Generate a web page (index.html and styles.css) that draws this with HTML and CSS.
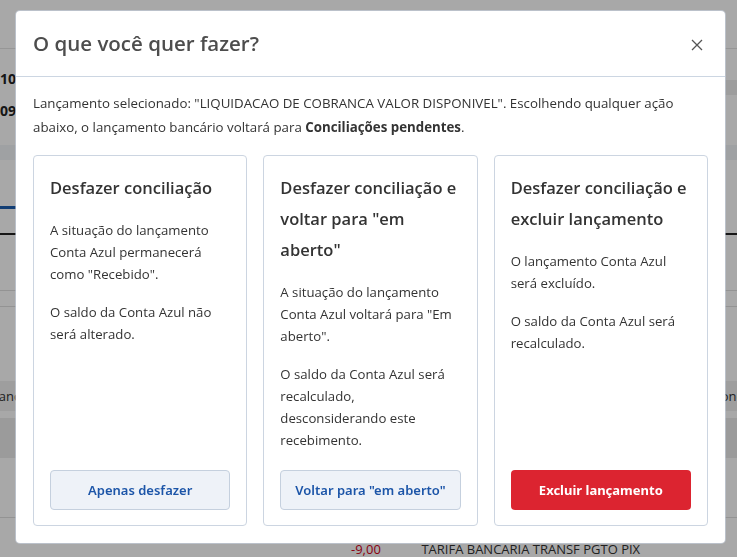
FILE: index.html
```html
<!DOCTYPE html>
<html lang="pt-BR">
<head>
    <meta charset="UTF-8">
    <meta name="viewport" content="width=device-width, initial-scale=1.0">
    <title>Conciliação</title>
    <link rel="stylesheet" href="styles.css">
</head>
<body>
    <div class="page">
        <div class="topbar"></div>
        <div class="summary">
            <div class="summary-values">
                <p class="amount">10.482,55</p>
                <p class="amount">09/04/2024</p>
            </div>
            <div class="summary-tag"></div>
        </div>
        <div class="band"></div>
        <div class="tabs"><span class="tab-active"></span></div>
        <div class="row"></div>
        <div class="row short"></div>
        <div class="row-group">
            <div class="row-head">
                <span class="head-left">Lançamento</span>
                <span class="head-right">Conciliação</span>
            </div>
            <div class="row-dark"></div>
        </div>
        <div class="row tall"></div>
        <div class="entry">
            <span class="value">-9,00</span>
            <span class="desc">TARIFA BANCARIA TRANSF PGTO PIX</span>
        </div>
    </div>

    <div class="backdrop">
        <div class="modal">
            <div class="modal-header">
                <h2>O que você quer fazer?</h2>
                <button class="close-btn" aria-label="Fechar">
                    <svg width="12" height="12" viewBox="0 0 12 12">
                        <path d="M1 1 L11 11 M11 1 L1 11" stroke="#555" stroke-width="1.3" fill="none"/>
                    </svg>
                </button>
            </div>
            <div class="modal-body">
                <p class="intro">Lançamento selecionado: "LIQUIDACAO DE COBRANCA VALOR DISPONIVEL". Escolhendo qualquer ação abaixo, o lançamento bancário voltará para <strong>Conciliações pendentes</strong>.</p>

                <div class="options">
                    <div class="option">
                        <h3>Desfazer conciliação</h3>
                        <p>A situação do lançamento Conta Azul permanecerá como "Recebido".</p>
                        <p>O saldo da Conta Azul não será alterado.</p>
                        <button class="btn btn-light">Apenas desfazer</button>
                    </div>
                    <div class="option">
                        <h3>Desfazer conciliação e voltar para "em aberto"</h3>
                        <p>A situação do lançamento Conta Azul voltará para "Em aberto".</p>
                        <p>O saldo da Conta Azul será recalculado, desconsiderando este recebimento.</p>
                        <button class="btn btn-light">Voltar para "em aberto"</button>
                    </div>
                    <div class="option">
                        <h3>Desfazer conciliação e excluir lançamento</h3>
                        <p>O lançamento Conta Azul será excluído.</p>
                        <p>O saldo da Conta Azul será recalculado.</p>
                        <button class="btn btn-danger">Excluir lançamento</button>
                    </div>
                </div>
            </div>
        </div>
    </div>
</body>
</html>
```

FILE: styles.css
```css
* {
    box-sizing: border-box;
    margin: 0;
    padding: 0;
}

body {
    font-family: "Open Sans", "Noto Sans", sans-serif;
    background-color: #fff;
    color: #333;
    overflow: hidden;
}

/* pagina por tras do modal */
.page {
    width: 737px;
    height: 557px;
    overflow: hidden;
}

.topbar {
    height: 49px;
    border-bottom: 1px solid #e4e4e4;
}

.summary {
    height: 96px;
    display: flex;
    justify-content: space-between;
}

.summary-values {
    padding-top: 14px;
}

.summary-tag {
    width: 60px;
    height: 15px;
    margin-top: 31px;
    background-color: #eeeeee;
}

.amount {
    font-size: 14px;
    font-weight: 700;
    color: #222;
    line-height: 32px;
}

.band {
    height: 15px;
    background-color: #f1f4f8;
}

.tabs {
    height: 75px;
    padding-top: 46px;
    border-bottom: 2px solid #222;
}

.tab-active {
    display: block;
    width: 120px;
    height: 3px;
    background-color: #1c5fb0;
}

.row {
    height: 56px;
    border-bottom: 1px solid #e0e0e0;
}

.row.short {
    height: 16px;
}

.row-group {
    padding-top: 74px;
}

.row-head {
    height: 30px;
    background-color: #f0f0f0;
    font-size: 13px;
    line-height: 30px;
    color: #333;
    margin-bottom: 7px;
    display: flex;
    justify-content: space-between;
}

.head-left {
    margin-left: -8px;
}

.head-right {
    margin-right: -44px;
}

.row-dark {
    height: 40px;
    background-color: #ebebeb;
}

.row.tall {
    height: 60px;
    border-bottom: 1px solid #e0e0e0;
}

.entry {
    height: 39px;
    font-size: 13px;
    line-height: 62px;
    color: #333;
}

.value {
    display: inline-block;
    margin-left: 351px;
    width: 67px;
    color: #d0021b;
}

/* modal */
.backdrop {
    position: fixed;
    inset: 0;
    background-color: rgba(0, 0, 0, 0.34);
}

.modal {
    position: absolute;
    left: 16px;
    top: 11px;
    width: 709px;
    height: 532px;
    background: white;
    border-radius: 4px;
    box-shadow: 0 0 0 1px rgba(200, 210, 225, 0.6);
    display: flex;
    flex-direction: column;
}

.modal-header {
    height: 66px;
    border-bottom: 1px solid #ccd6e2;
    display: flex;
    align-items: center;
    justify-content: space-between;
    padding: 0 22px 0 17px;
}

.modal-header h2 {
    font-size: 20.5px;
    font-weight: 600;
    color: #4d4d4d;
    margin-top: -2px;
}

.close-btn {
    background: none;
    border: none;
    cursor: pointer;
    display: flex;
    margin-top: 2px;
}

.modal-body {
    flex: 1;
    padding: 14px 17px 17px;
    display: flex;
    flex-direction: column;
}

.intro {
    font-size: 13.3px;
    line-height: 24px;
    color: #333;
    margin-bottom: 16px;
}

.intro strong {
    font-weight: 700;
}

.options {
    flex: 1;
    display: grid;
    grid-template-columns: repeat(3, 1fr);
    gap: 16px;
}

.option {
    border: 1px solid #ccd5e1;
    border-radius: 4px;
    padding: 16px 16px 15px;
    display: flex;
    flex-direction: column;
}

.option h3 {
    font-size: 16.5px;
    font-weight: 600;
    line-height: 31px;
    color: #333;
    margin-bottom: 16px;
}

.option p {
    font-size: 13.2px;
    line-height: 22px;
    color: #333;
    margin-bottom: 16px;
}

.btn {
    margin-top: auto;
    height: 40px;
    border-radius: 4px;
    font-family: "Noto Sans", sans-serif;
    font-size: 13px;
    font-weight: 600;
    cursor: pointer;
}

.btn-light {
    background-color: #eef2f8;
    border: 1px solid #c5d0de;
    color: #1c55a8;
}

.btn-danger {
    background-color: #dc2430;
    border: none;
    color: white;
    font-weight: 700;
}
```
